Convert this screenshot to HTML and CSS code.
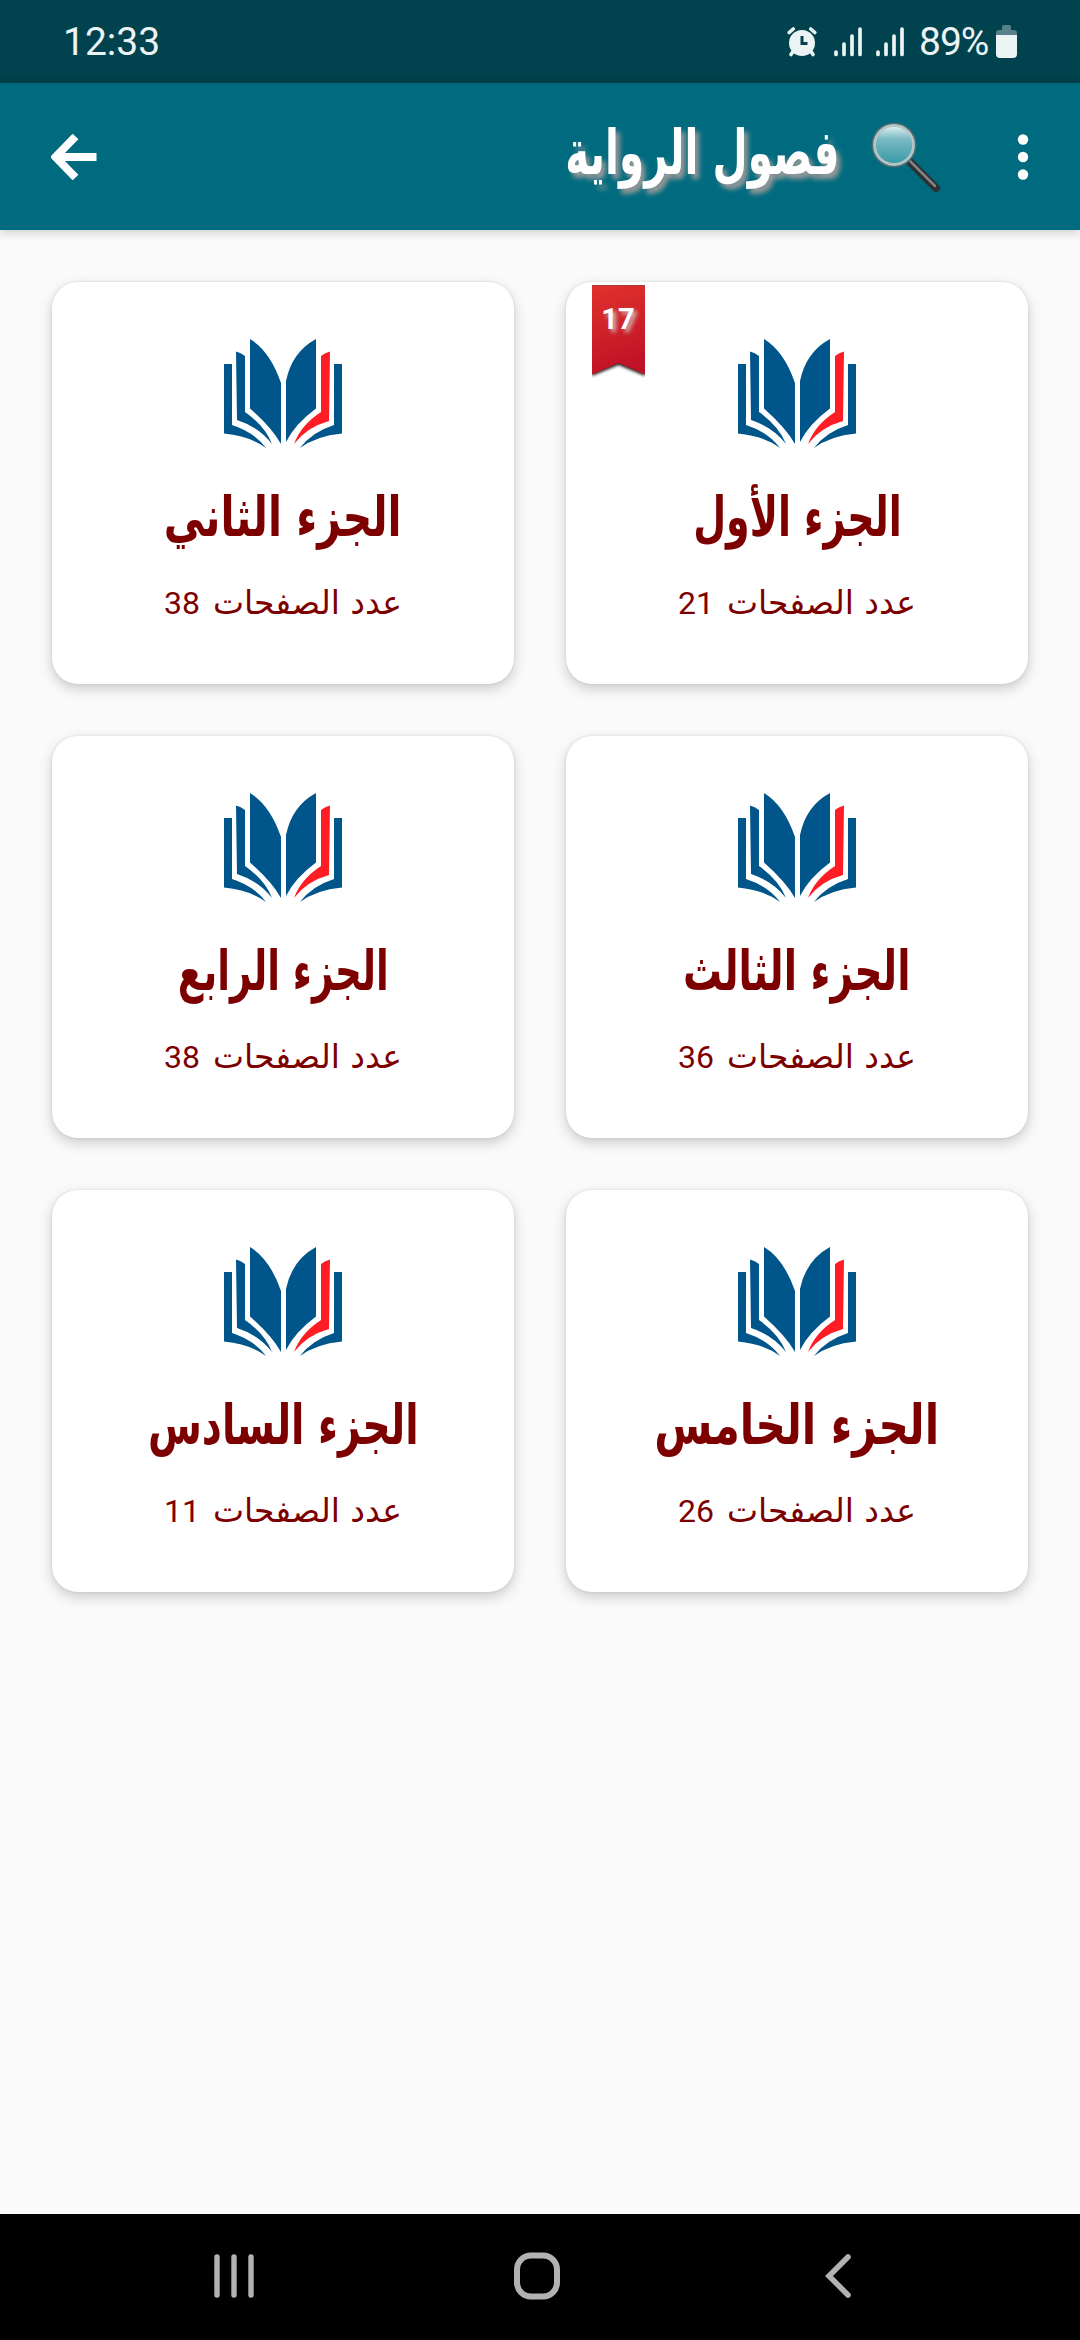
FILE: index.html
```
<!DOCTYPE html>
<html lang="ar" dir="rtl">
<head>
  <meta charset="UTF-8">
  <meta name="viewport" content="width=device-width, initial-scale=1.0">
  <title>فصول الرواية</title>
  <link rel="stylesheet" href="styles.css">
</head>
<body>
  <!-- shared book logo -->
  <svg class="defs" width="0" height="0">
    <symbol id="book" viewBox="0 0 118 110">
      <g fill="#00558b">
        <path d="M0 25h8v61q22 7 34 23q-16-12-42-14.500z"/>
        <path d="M12 12.500q5 1 9 4.500v56q20 14 27 32q-13-17-35-24z"/>
        <path d="M26 0Q46 12 57 44v61Q48 89 26 69.500z"/>
        <path d="M92 0Q68 13 62 42v61q9-18 30-33.500z"/>
        <path d="M118 25h-8v61q-22 7-34 23q16-12 42-14.500z"/>
      </g>
      <path fill="#ff1d25" d="M106 12.500q-5 1-9 4.500v56q-20 13-27 32q13-17 35-23z"/>
    </symbol>
  </svg>

  <div class="status-bar" dir="ltr">
    <span class="clock">12:33</span>
    <div class="status-icons">
      <svg class="alarm" viewBox="0 0 30 30">
        <g stroke="#ebf3f4" stroke-width="3.600" stroke-linecap="round">
          <path d="M2.200 5.500l4-3.500M27.800 5.500l-4-3.500M6 24.500l-2 3M24 24.500l2 3"/>
        </g>
        <circle cx="15" cy="16" r="13" fill="#ebf3f4"/>
        <path d="M15 9v7.500h5.500" fill="none" stroke="#00424d" stroke-width="3"/>
      </svg>
      <svg class="signal" viewBox="0 0 28 30">
        <path d="M2 25v2.500M10 17v10.500M18 9v18.500M26 2v25.500" stroke="#ebf3f4" stroke-width="3.700" stroke-linecap="round"/>
      </svg>
      <svg class="signal second-sim" viewBox="0 0 28 30">
        <path d="M2 25v2.500M10 17v10.500M18 9v18.500M26 2v25.500" stroke="#ebf3f4" stroke-width="3.700" stroke-linecap="round"/>
      </svg>
      <span class="percent">89%</span>
      <svg class="battery" viewBox="0 0 21 33">
        <path d="M0 10V8q0-3 3-3h3V2q0-2 2-2h5q2 0 2 2v3h3q3 0 3 3v2z" fill="#588088"/>
        <path d="M0 10h21v19q0 4-4 4H4q-4 0-4-4z" fill="#ebf3f4"/>
      </svg>
    </div>
  </div>

  <header class="toolbar">
    <svg class="more" viewBox="0 0 12 46">
      <g fill="#fff">
        <circle cx="6" cy="5.500" r="5.200"/>
        <circle cx="6" cy="23" r="5.200"/>
        <circle cx="6" cy="40.500" r="5.200"/>
      </g>
    </svg>
    <svg class="search" viewBox="0 0 70 72">
      <defs>
        <linearGradient id="glass" x1="0" y1="0" x2="0" y2="1">
          <stop offset="0" stop-color="#e4f3f5"/>
          <stop offset=".35" stop-color="#79b9c3"/>
          <stop offset="1" stop-color="#369aa5"/>
        </linearGradient>
      </defs>
      <g stroke-linecap="round">
        <path d="M39 41L65 67" stroke="#2b3032" stroke-width="8"/>
        <path d="M39 40L64 65" stroke="#858585" stroke-width="2.500"/>
      </g>
      <circle cx="23" cy="24" r="21.500" fill="none" stroke="#4d6b70" stroke-width="2"/>
      <circle cx="23" cy="24" r="19.500" fill="url(#glass)" stroke="#b5c5c7" stroke-width="2.800"/>
    </svg>
    <h1 class="page-title"><span>فصول الرواية</span></h1>
    <svg class="back" viewBox="0 0 46 46">
      <path d="M24.500 2.500L4.500 23l20 20.500M5 23h40.500" fill="none" stroke="#fff" stroke-width="8"/>
    </svg>
  </header>

  <main class="chapters">
    <div class="card">
      <div class="bookmark">
        <svg viewBox="0 0 53 94">
          <defs>
            <linearGradient id="ribbon" x1="0" y1="0" x2=".2" y2="1">
              <stop offset="0" stop-color="#e0332c"/>
              <stop offset="1" stop-color="#c01226"/>
            </linearGradient>
          </defs>
          <path class="ribbon-shadow" d="M0 3h53v88L26.500 80 0 91z"/>
          <path d="M0 0h53v89.500L26.500 78 0 89.500z" fill="url(#ribbon)"/>
          <path d="M0 .5h53" stroke="#a33c38"/>
        </svg>
        <span>17</span>
      </div>
      <svg class="book"><use href="#book"/></svg>
      <h2 class="name first"><span>الجزء الأول</span></h2>
      <p class="pages"><span class="label">عدد الصفحات</span><span class="count">21</span></p>
    </div>
    <div class="card">
      <svg class="book"><use href="#book"/></svg>
      <h2 class="name second"><span>الجزء الثاني</span></h2>
      <p class="pages"><span class="label">عدد الصفحات</span><span class="count">38</span></p>
    </div>
    <div class="card">
      <svg class="book"><use href="#book"/></svg>
      <h2 class="name third"><span>الجزء الثالث</span></h2>
      <p class="pages"><span class="label">عدد الصفحات</span><span class="count">36</span></p>
    </div>
    <div class="card">
      <svg class="book"><use href="#book"/></svg>
      <h2 class="name fourth"><span>الجزء الرابع</span></h2>
      <p class="pages"><span class="label">عدد الصفحات</span><span class="count">38</span></p>
    </div>
    <div class="card">
      <svg class="book"><use href="#book"/></svg>
      <h2 class="name fifth"><span>الجزء الخامس</span></h2>
      <p class="pages"><span class="label">عدد الصفحات</span><span class="count">26</span></p>
    </div>
    <div class="card">
      <svg class="book"><use href="#book"/></svg>
      <h2 class="name sixth"><span>الجزء السادس</span></h2>
      <p class="pages"><span class="label">عدد الصفحات</span><span class="count">11</span></p>
    </div>
  </main>

  <nav class="nav-bar" dir="ltr">
    <svg class="recents" viewBox="0 0 40 44">
      <path d="M3 3v38M20 3v38M37 3v38" stroke="#b2b2b2" stroke-width="5.400" stroke-linecap="round"/>
    </svg>
    <svg class="home" viewBox="0 0 46 48">
      <rect x="3" y="3.500" width="40" height="41" rx="14" fill="none" stroke="#b2b2b2" stroke-width="6"/>
    </svg>
    <svg class="nav-back" viewBox="0 0 26 44">
      <path d="M23 3L4 22l19 19" fill="none" stroke="#b2b2b2" stroke-width="5.600" stroke-linecap="round"/>
    </svg>
  </nav>
</body>
</html>
```
FILE: styles.css
```
* {
  box-sizing: border-box;
}

body {
  margin: 0;
  height: 2340px;
  display: flex;
  flex-direction: column;
  background-color: #fafafa;
  font-family: Roboto, "DejaVu Sans", sans-serif;
}

svg {
  display: block;
  flex: none;
}

.defs {
  position: absolute;
}

/* status bar */
.status-bar {
  height: 83px;
  padding: 0 63px;
  display: flex;
  justify-content: space-between;
  align-items: center;
  background-color: #00424d;
  color: #ebf3f4;
  font-size: 39px;
}

.clock {
  line-height: 80px;
}

.status-icons {
  display: flex;
  align-items: center;
}

.alarm {
  width: 30px;
  height: 30px;
}

.signal {
  width: 28px;
  height: 30px;
  margin-left: 17px;
}

.second-sim {
  margin-left: 14px;
}

.percent {
  width: 72px;
  margin: 0 5px 0 15px;
  line-height: 80px;
  letter-spacing: -1px;
  white-space: nowrap;
}

.battery {
  width: 21px;
  height: 33px;
}

/* toolbar */
.toolbar {
  height: 147px;
  padding: 0 51px;
  display: flex;
  align-items: center;
  background-color: #006b7f;
  box-shadow: 0 2px 10px rgba(0, 0, 0, 0.2);
}

.more {
  width: 12px;
  height: 46px;
}

.search {
  width: 70px;
  height: 72px;
  margin-right: 76px;
}

.page-title {
  width: 273px;
  margin: 0 32px 8px auto;
  font-family: "DejaVu Sans", sans-serif;
  font-size: 50px;
  line-height: 80px;
  color: #fff;
  text-shadow: 5px 4px 5px #999;
  white-space: nowrap;
}

.page-title span {
  display: inline-block;
  transform: scale(0.81, 1.24);
  transform-origin: right;
}

.back {
  width: 46px;
  height: 46px;
}

/* chapter cards */
.chapters {
  flex: 1;
  padding: 52px;
  display: grid;
  grid-template-columns: 1fr 1fr;
  grid-auto-rows: 402px;
  align-content: start;
  gap: 52px;
}

.card {
  position: relative;
  padding-top: 57px;
  display: flex;
  flex-direction: column;
  align-items: center;
  background-color: #fff;
  border-radius: 26px;
  box-shadow: 0 5px 13px rgba(0, 0, 0, 0.19), 0 0 3px rgba(0, 0, 0, 0.1);
  color: #7d0000;
}

.book {
  width: 118px;
  height: 110px;
}

.name {
  margin: 31px 0 0;
  font-family: "DejaVu Sans", sans-serif;
  font-size: 46px;
  line-height: 74px;
  white-space: nowrap;
}

/* tall, narrow lettering */
.name span {
  display: inline-block;
}

.first span {
  transform: scale(0.825, 1.2);
}

.second span {
  transform: scale(0.89, 1.2);
}

.third span {
  transform: scale(0.845, 1.2);
}

.fourth span {
  transform: scale(0.81, 1.2);
}

.fifth span {
  transform: scale(0.915, 1.2);
}

.sixth span {
  transform: scale(0.85, 1.2);
}

.pages {
  margin: 19px 0 0;
  display: flex;
  gap: 13px;
  font-size: 32px;
  line-height: 60px;
  white-space: nowrap;
}

.label {
  font-family: "DejaVu Sans", sans-serif;
  font-size: 33px;
}

.bookmark {
  position: absolute;
  left: 26px;
  top: 3px;
  width: 53px;
  height: 94px;
}

.bookmark svg {
  width: 53px;
  height: 94px;
}

.ribbon-shadow {
  fill: #222;
  filter: blur(1.5px);
}

.bookmark span {
  position: absolute;
  top: 16px;
  left: 0;
  width: 52px;
  text-align: center;
  font-size: 29px;
  font-weight: bold;
  line-height: 36px;
  color: #fff;
  text-shadow: 3px 3px 4px #ccc;
}

/* navigation bar */
.nav-bar {
  height: 126px;
  padding: 0 229px 3px 214px;
  display: flex;
  justify-content: space-between;
  align-items: center;
  background-color: #000;
}

.recents {
  width: 40px;
  height: 44px;
}

.home {
  width: 46px;
  height: 48px;
  margin-right: 6px;
}

.nav-back {
  width: 26px;
  height: 44px;
}
```
